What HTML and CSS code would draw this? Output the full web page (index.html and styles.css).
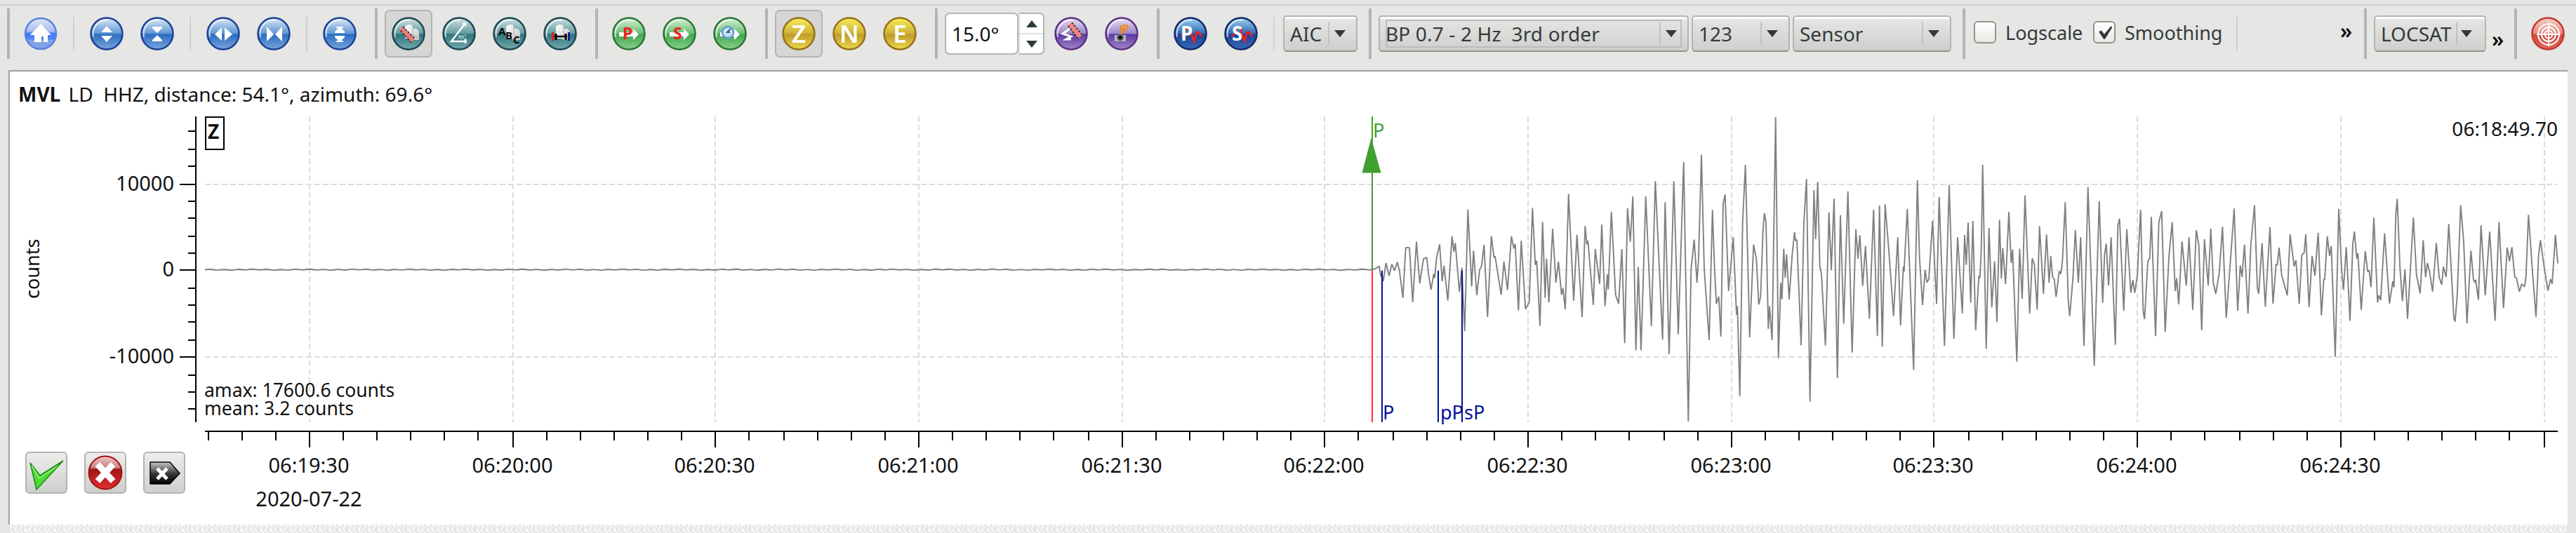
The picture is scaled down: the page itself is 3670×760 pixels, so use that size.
FILE: index.html
```
<!DOCTYPE html>
<html lang="en">
<head>
    <meta charset="UTF-8">
    <title>Waveform Picker</title>
    <link rel="stylesheet" href="styles.css">
</head>
<body>
    <!-- shared gradients and shapes -->
    <svg class="defs" width="0" height="0">
        <defs>
            <linearGradient id="home" x2="0" y2="1"><stop offset="0" stop-color="#e4e8f8"/><stop offset=".42" stop-color="#a9bdf0"/><stop offset=".5" stop-color="#3b76f6"/><stop offset=".68" stop-color="#5588f5"/><stop offset=".72" stop-color="#87a4e6"/><stop offset="1" stop-color="#7d9fe6"/></linearGradient>
            <linearGradient id="blue" x2="0" y2="1"><stop offset="0" stop-color="#dfeaf7"/><stop offset=".5" stop-color="#5c96d3"/><stop offset=".52" stop-color="#2a6cc0"/><stop offset="1" stop-color="#7ba5dc"/></linearGradient>
            <linearGradient id="teal" x2="0" y2="1"><stop offset="0" stop-color="#d3e4e5"/><stop offset=".5" stop-color="#5f9a9e"/><stop offset=".52" stop-color="#2c747c"/><stop offset="1" stop-color="#76abae"/></linearGradient>
            <linearGradient id="green" x2="0" y2="1"><stop offset="0" stop-color="#daf3da"/><stop offset=".5" stop-color="#68bb70"/><stop offset=".52" stop-color="#43a550"/><stop offset="1" stop-color="#86d289"/></linearGradient>
            <linearGradient id="gold" x2="0" y2="1"><stop offset="0" stop-color="#f7ee58"/><stop offset=".5" stop-color="#cdb136"/><stop offset=".52" stop-color="#bd9a26"/><stop offset="1" stop-color="#ebd94e"/></linearGradient>
            <linearGradient id="violet" x2="0" y2="1"><stop offset="0" stop-color="#ece6f5"/><stop offset=".5" stop-color="#9a82c7"/><stop offset=".52" stop-color="#5b38a0"/><stop offset="1" stop-color="#a187c9"/></linearGradient>
            <linearGradient id="navy" x2="0" y2="1"><stop offset="0" stop-color="#9ed4f3"/><stop offset=".5" stop-color="#2f68b0"/><stop offset=".52" stop-color="#1c4396"/><stop offset="1" stop-color="#3569b8"/></linearGradient>
            <linearGradient id="red" x2="0" y2="1"><stop offset="0" stop-color="#f7d3cc"/><stop offset=".5" stop-color="#e2877c"/><stop offset=".52" stop-color="#cf4a3f"/><stop offset="1" stop-color="#e06a5c"/></linearGradient>
            <linearGradient id="page" x2="1" y2="1"><stop offset="0" stop-color="#fff"/><stop offset="1" stop-color="#c6c6c6"/></linearGradient>
            <linearGradient id="dark" x2="0" y2="1"><stop offset="0" stop-color="#c8c8c8"/><stop offset=".55" stop-color="#333"/><stop offset="1" stop-color="#000"/></linearGradient>
            <linearGradient id="stop" x2="0" y2="1"><stop offset="0" stop-color="#edc9c9"/><stop offset=".35" stop-color="#c98080"/><stop offset=".4" stop-color="#a01414"/><stop offset="1" stop-color="#e03030"/></linearGradient>
            <pattern id="hatch" width="14" height="8" patternUnits="userSpaceOnUse">
                <path d="M0 0h2v2h-2zM6 0h4v2h-4zM2 2h2v2h-2zM10 2h2v2h-2zM6 4h2v2h-2zM0 4h2v2h-2zM8 6h2v2h-2zM12 6h2v2h-2z" fill="#fff"/>
            </pattern>
            <symbol id="sheets" viewBox="0 0 48 48">
                <path d="M17 14q4-5 10-2l1 5q8-1 9 5v11h-9l-3-2h-8z" fill="url(#page)"/>
                <path d="M28 17v9l8 3" fill="none" stroke="#aaa"/>
            </symbol>
        </defs>
    </svg>

    <div class="toolbar">
        <div class="group g-view">
            <span class="tool"><svg class="icon" viewBox="0 0 48 48"><circle class="ball home" cx="24" cy="24" r="22"/><path d="M24 10 39 26H34V36H28V28H25V36H15V26H9Z" fill="#fff"/></svg></span>
            <i class="sep"></i>
            <span class="tool"><svg class="icon" viewBox="0 0 48 48"><circle class="ball blue" cx="24" cy="24" r="22.5"/><circle class="shine" cx="24" cy="24" r="19.5"/><path d="M24 13 32 22H16ZM16 27H32L24 36Z" fill="#fff"/></svg></span>
            <span class="tool"><svg class="icon" viewBox="0 0 48 48"><circle class="ball blue" cx="24" cy="24" r="22.5"/><circle class="shine" cx="24" cy="24" r="19.5"/><path d="M17 14H31V16L24 23L17 16ZM24 26 31 33V35H17V33Z" fill="#fff"/></svg></span>
            <i class="sep"></i>
            <span class="tool"><svg class="icon" viewBox="0 0 48 48"><circle class="ball blue" cx="24" cy="24" r="22.5"/><circle class="shine" cx="24" cy="24" r="19.5"/><path d="M22 15V34L12 25ZM26 15 37 25 26 34Z" fill="#fff"/></svg></span>
            <span class="tool"><svg class="icon" viewBox="0 0 48 48"><circle class="ball blue" cx="24" cy="24" r="22.5"/><circle class="shine" cx="24" cy="24" r="19.5"/><path d="M14 14 24 25 14 35ZM36 14V35L26 25Z" fill="#fff"/></svg></span>
            <i class="sep"></i>
            <span class="tool"><svg class="icon" viewBox="0 0 48 48"><circle class="ball blue" cx="24" cy="24" r="22.5"/><circle class="shine" cx="24" cy="24" r="19.5"/><path d="M19 14H29V16H26L31 21V23H17V21L22 16H19ZM17 27H31V29L26 34H29V36H19V34H22L17 29Z" fill="#fff"/></svg></span>
        </div>

        <div class="group g-pick">
            <span class="tool pressed"><svg class="icon" viewBox="0 0 48 48"><circle class="ball teal" cx="24" cy="24" r="22.5"/><circle class="shine" cx="24" cy="24" r="19.5"/><use href="#sheets" x="2"/><path d="M11 18 16 14 33 31 28 37Z" fill="#ec7b78"/><path d="M16 14 33 31M28 37 11 18" fill="none" stroke="#222" stroke-width="1.500" stroke-dasharray="3 2"/></svg></span>
            <span class="tool"><svg class="icon" viewBox="0 0 48 48"><circle class="ball teal" cx="24" cy="24" r="22.5"/><circle class="shine" cx="24" cy="24" r="19.5"/><path d="M33 9 13 35H35M29 10l4-1v4M33 31v7" fill="none" stroke="#fff" stroke-width="2.4"/><text x="23" y="31" class="tiny">60°</text></svg></span>
            <span class="tool"><svg class="icon" viewBox="0 0 48 48"><circle class="ball teal" cx="24" cy="24" r="22.5"/><circle class="shine" cx="24" cy="24" r="19.5"/><use href="#sheets" x="2"/><text x="8" y="26" class="abc">A</text><text x="18" y="32" class="abc">B</text><text x="29" y="38" class="abc">C</text></svg></span>
            <span class="tool"><svg class="icon" viewBox="0 0 48 48"><circle class="ball teal" cx="24" cy="24" r="22.5"/><circle class="shine" cx="24" cy="24" r="19.5"/><use href="#sheets" x="1"/><path d="M16 28H34" stroke="#000" stroke-width="2.5"/><path d="M18 24v9M32 24v9" stroke="#000" stroke-width="3"/><path d="M12 22h3v12h-3z" fill="#f01818"/><path d="M35 22h3v12h-3z" fill="#1a1a90"/></svg></span>
        </div>

        <div class="group g-phase">
            <span class="tool"><svg class="icon" viewBox="0 0 48 48"><circle class="ball green" cx="24" cy="24" r="22.5"/><circle class="shine" cx="24" cy="24" r="19.5"/><path d="M10 22H30V17L38 25 30 33V28H10Z" fill="#fff"/><text x="15" y="32" class="pick">P</text></svg></span>
            <span class="tool"><svg class="icon" viewBox="0 0 48 48"><circle class="ball green" cx="24" cy="24" r="22.5"/><circle class="shine" cx="24" cy="24" r="19.5"/><path d="M10 22H30V17L38 25 30 33V28H10Z" fill="#fff"/><text x="15" y="32" class="pick">S</text></svg></span>
            <span class="tool"><svg class="icon" viewBox="0 0 48 48"><circle class="ball green" cx="24" cy="24" r="22.5"/><circle class="shine" cx="24" cy="24" r="19.5"/><path d="M10 22H30V17L38 25 30 33V28H10Z" fill="#fff"/><circle cx="21" cy="22" r="8" fill="#c5e2f5" stroke="#5f9bd6" stroke-width="2.5"/><path d="M25 17l-5 5h4" fill="none" stroke="#234" stroke-width="1.5"/></svg></span>
        </div>

        <div class="group g-comp">
            <span class="tool pressed"><svg class="icon" viewBox="0 0 48 48"><circle class="ball gold" cx="24" cy="24" r="22.5"/><text x="24" y="37" class="comp">Z</text></svg></span>
            <span class="tool"><svg class="icon" viewBox="0 0 48 48"><circle class="ball gold" cx="24" cy="24" r="22.5"/><text x="24" y="37" class="comp">N</text></svg></span>
            <span class="tool"><svg class="icon" viewBox="0 0 48 48"><circle class="ball gold" cx="24" cy="24" r="22.5"/><text x="24" y="37" class="comp">E</text></svg></span>
        </div>

        <div class="group g-rot">
            <div class="spin">
                <div class="spin-value">15.0°</div>
                <div class="spin-buttons"><span><i class="arrow up"></i></span><span><i class="arrow"></i></span></div>
            </div>
            <span class="tool"><svg class="icon" viewBox="0 0 48 48"><circle class="ball violet" cx="24" cy="24" r="22.5"/><circle class="shine" cx="24" cy="24" r="19.5"/><path d="M22 17 12 24 24 28 17 32H24" fill="none" stroke="#fff" stroke-width="3"/><path d="M19 12 25 8 40 26 34 31Z" fill="#ee8582"/><path d="M25 8 40 26M34 31 19 12" fill="none" stroke="#222" stroke-width="1.500" stroke-dasharray="3 2"/></svg></span>
            <span class="tool"><svg class="icon" viewBox="0 0 48 48"><circle class="ball violet" cx="24" cy="24" r="22.5"/><circle class="shine" cx="24" cy="24" r="19.5"/><path d="M23 12V27" stroke="#f08a1c" stroke-width="3"/><text x="25" y="23" class="ip">P</text><path d="M14 26h16v9h-16z" fill="#b9b4c0"/><circle cx="22" cy="29.500" r="5" fill="#666"/><circle cx="22" cy="29.500" r="2.500" fill="#000"/></svg></span>
        </div>

        <div class="group g-auto">
            <span class="tool"><svg class="icon" viewBox="0 0 48 48"><circle class="ball navy" cx="24" cy="24" r="22.5"/><circle class="shine" cx="24" cy="24" r="19.5"/><path class="wiggle" d="M10 27 14 25 18 16H23L29 35 33 22 36 22 40 28"/><text x="10" y="34" class="auto">P</text><path class="wiggle" d="M25 25 29 35 33 22 36 22 40 28"/></svg></span>
            <span class="tool"><svg class="icon" viewBox="0 0 48 48"><circle class="ball navy" cx="24" cy="24" r="22.5"/><circle class="shine" cx="24" cy="24" r="19.5"/><path class="wiggle" d="M10 27 14 25 18 16H23L29 35 33 22 36 22 40 28"/><text x="11" y="34" class="auto">S</text><path class="wiggle" d="M26 27 29 35 33 22 36 22 40 28"/></svg></span>
            <i class="sep"></i>
            <div class="combo c-aic"><span>AIC</span><b><i class="arrow"></i></b></div>
        </div>

        <div class="group g-filter">
            <div class="combo c-filter focus"><span>BP 0.7 - 2 Hz&nbsp; 3rd order</span><b><i class="arrow"></i></b></div>
            <div class="combo c-num"><span>123</span><b><i class="arrow"></i></b></div>
            <div class="combo c-sensor"><span>Sensor</span><b><i class="arrow"></i></b></div>
        </div>

        <div class="group g-scale">
            <label class="check c-log"><span class="box"></span>Logscale</label>
            <label class="check c-smooth"><span class="box"><svg viewBox="0 0 32 32"><path d="M7 15 11 13 16 19 27 6 29 8 17 27H15Z" fill="#2e3436"/></svg></span>Smoothing</label>
            <i class="sep"></i>
            <span class="more">»</span>
        </div>

        <div class="group g-loc">
            <div class="combo c-loc"><span>LOCSAT</span><b><i class="arrow"></i></b></div>
            <span class="more low">»</span>
        </div>

        <div class="group g-target">
            <span class="tool"><svg class="icon" viewBox="0 0 48 48"><circle class="ball red" cx="24" cy="24" r="22.5"/><g fill="none" stroke="#fff" stroke-width="2"><circle cx="25" cy="25" r="15"/><circle cx="25" cy="25" r="10"/><circle cx="25" cy="25" r="5.500"/><path d="M25 8V42M8 25H42"/></g></svg></span>
        </div>
    </div>

    <div class="panel">
        <div class="station"><b>MVL</b> LD&nbsp; HHZ, distance: 54.1°, azimuth: 69.6°</div>

        <svg class="plot" viewBox="14 160 3644 480">
            <g id="grid"></g>
            <path class="zero" d="M292 385H3644"/>
            <path id="trace" class="trace"/>

            <path class="axis" d="M279 166V602M292 615H3644"/>
            <g id="ticks"></g>
            <g class="y-label">
                <text x="248" y="272">10000</text>
                <text x="248" y="394">0</text>
                <text x="248" y="518">-10000</text>
            </g>
            <text class="unit" transform="translate(56 426) rotate(-90)">counts</text>

            <rect class="comp-box" x="293" y="167" width="26" height="46"/>
            <text class="comp-name" x="296" y="198">Z</text>
            <text class="stamp" x="3644" y="194">06:18:49.70</text>
            <text class="stats" x="291" y="565.500">amax: 17600.6 counts</text>
            <text class="stats" x="291" y="591.500">mean: 3.2 counts</text>

            <!-- manual pick -->
            <path class="pick-line" d="M1955 166V385"/>
            <path class="pick-error" d="M1955 385V602"/>
            <path class="pick-head" d="M1953.500 197 1967.500 246.500H1940.500Z"/>
            <text class="pick-name" x="1956" y="196">P</text>

            <!-- theoretical arrivals -->
            <path class="arrival" d="M1969 386V602M2049 386V602M2083 386V602"/>
            <g class="arrival-name">
                <text x="1970" y="598">P</text>
                <text x="2052" y="598">pP</text>
                <text x="2086" y="598">sP</text>
            </g>
        </svg>

        <div class="footer">
            <div class="actions">
                <span class="action"><svg viewBox="0 0 60 60"><path d="M7 16 21 34 54 13 16 54Z" fill="#4edb33" stroke="#1d8a12" stroke-width="1.500"/><path d="M9 20 20 38 45 21" fill="none" stroke="#9bf088" stroke-width="1.500"/></svg></span>
                <span class="action"><svg viewBox="0 0 60 60"><circle cx="30" cy="30" r="23.500" fill="url(#stop)" stroke="#a51414" stroke-width="2"/><path d="M19 18 41 42M41 18 19 42" stroke="#fff" stroke-width="9"/></svg></span>
                <span class="action"><svg viewBox="0 0 60 60"><path d="M10 15H38L52 31 38 46H10Z" fill="url(#dark)" stroke="#000" stroke-width="1.500"/><path d="M20 24 34 39M34 24 20 39" stroke="#fff" stroke-width="5"/></svg></span>
            </div>
            <svg class="times" viewBox="280 640 3378 108"><g id="times"></g></svg>
        </div>
    </div>
    <svg class="status"><rect width="100%" height="100%" fill="url(#hatch)"/></svg>

    <script src="plot.js"></script>
</body>
</html>
```
FILE: styles.css
```
* {
    box-sizing: border-box;
}
body {
    margin: 0;
    width: 3670px;
    height: 760px;
    overflow: hidden;
    background-color: #e6e6e4;
    font-family: "Noto Sans", "Open Sans", sans-serif;
    font-size: 28px;
    color: #111;
}
.defs {
    position: absolute;
}

/* Toolbar */
.toolbar {
    display: flex;
    height: 94px;
    margin-top: 6px;
    padding: 4px 0 0 10px;
    border-top: 2px solid #cfcfcd;
}
.group {
    display: flex;
    align-items: center;
    flex: none;
    height: 72px;
    padding-left: 10px;
    border-left: 4px solid #b4b4b2;
}
.g-view { width: 524px; }
.g-pick { width: 314px; }
.g-phase { width: 242px; }
.g-comp { width: 242px; }
.g-rot { width: 316px; }
.g-auto { width: 302px; }
.g-filter { width: 846px; }
.g-scale { width: 572px; padding-left: 12px; }
.g-loc { width: 214px; }
.g-target { width: 82px; }
.tool {
    display: flex;
    flex: none;
    align-items: center;
    justify-content: center;
    width: 68px;
    height: 68px;
    margin-right: 4px;
}
.tool.pressed {
    background-color: #d6d6d4;
    border: 2px solid #b4b4b2;
    border-radius: 7px;
}
.icon {
    width: 48px;
    height: 48px;
    flex: none;
}
.sep {
    width: 2px;
    height: 48px;
    margin: 0 12px 0 8px;
    background-color: #cfcfcd;
}
.ball { stroke-width: 2.5; }
.home { fill: url(#home); stroke: #5b82dc; }
.blue { fill: url(#blue); stroke: #1c4296; }
.teal { fill: url(#teal); stroke: #1c4652; }
.green { fill: url(#green); stroke: #2a7438; }
.gold { fill: url(#gold); stroke: #96701c; }
.violet { fill: url(#violet); stroke: #593084; }
.navy { fill: url(#navy); stroke: #122a68; }
.red { fill: url(#red); stroke: #c4382e; }
.shine {
    fill: none;
    stroke: #fff;
    stroke-width: 2;
    stroke-opacity: 0.7;
    stroke-dasharray: 38 200;
    stroke-dashoffset: -56;
}
.icon text {
    font-weight: bold;
}
.tiny { font-size: 7px; fill: #b5d5d8; }
.abc { font-size: 15px; fill: #000; }
.pick { font-size: 23px; fill: #ee2020; }
.comp { font-size: 35px; fill: #fff; text-anchor: middle; }
.icon .comp { font-weight: 600; }
.ip { font-size: 16px; fill: #f08a1c; }
.auto { font-size: 28px; fill: #fff; }
.wiggle { fill: none; stroke: #f02020; stroke-width: 2.5; }

.arrow {
    border: 8px solid transparent;
    border-top: 10px solid #2e3a3a;
    border-bottom: 0;
}
.arrow.up {
    border-top: 0;
    border-bottom: 10px solid #2e3a3a;
}
.spin {
    display: flex;
    width: 142px;
    height: 60px;
    margin-right: 4px;
}
.spin-value {
    width: 105px;
    padding-left: 8px;
    line-height: 56px;
    background-color: #fff;
    border: 2px solid #b4b4b2;
    border-radius: 7px;
}
.spin-buttons {
    display: flex;
    flex-direction: column;
    width: 37px;
    background-color: #fff;
    border: 2px solid #b4b4b2;
    border-left-color: #e0e0de;
    border-radius: 0 7px 7px 0;
}
.spin-buttons span {
    display: flex;
    flex: 1;
    align-items: center;
    justify-content: center;
}
.spin-buttons span + span {
    border-top: 2px solid #e0e0de;
}
.combo {
    display: flex;
    align-items: center;
    height: 52px;
    margin-right: 4px;
    padding-left: 8px;
    color: #343a3b;
    background: linear-gradient(#fff 0, #fff 2px, #e4e4e2 4px, #cfcfcd);
    border: 2px solid #b4b4b2;
    border-bottom-color: #94948c;
    border-radius: 5px;
    position: relative;
}
.combo span {
    flex: 1;
    line-height: 46px;
    white-space: nowrap;
}
.combo b {
    display: flex;
    align-items: center;
    justify-content: center;
    width: 40px;
    height: 32px;
    padding-right: 8px;
    border-left: 2px solid #c2c2c0;
}
/* focus frame drawn over the button */
.combo.focus::after {
    content: "";
    position: absolute;
    inset: 4px 8px 4px 8px;
    border: 2px solid #bcbcba;
}
.c-aic { width: 106px; }
.c-filter { width: 442px; }
.c-filter span { letter-spacing: 0.15px; }
.c-num { width: 140px; }
.c-sensor { width: 226px; }
.c-loc { width: 160px; }
.c-loc b {
    width: 41px;
    padding-right: 14px;
}
.check {
    display: flex;
    align-items: center;
    gap: 13px;
    height: 50px;
    margin-bottom: 4px;
    font-size: 27px;
    color: #343a3b;
}
.c-log { width: 170px; }
.c-smooth { width: 196px; }
.box {
    flex: none;
    width: 32px;
    height: 32px;
    background: linear-gradient(#fff, #e8e8e6);
    border: 2px solid #94948c;
    border-radius: 6px;
}
.box svg {
    display: block;
    width: 28px;
    height: 28px;
}
.more {
    margin: -10px 0 0 134px;
    font-size: 30px;
    font-weight: 600;
}
.more.low {
    margin: 14px 0 0 4px;
}

/* Trace panel */
.panel {
    display: flex;
    flex-direction: column;
    width: 3646px;
    height: 648px;
    margin-left: 12px;
    background-color: #fff;
    border-top: 2px solid #a0a09e;
    border-left: 2px solid #a0a09e;
}
.station {
    height: 58px;
    padding: 12px 0 0 12px;
    line-height: 40px;
    white-space: nowrap;
}
.station b {
    margin-right: 4px;
}
.plot {
    display: block;
    width: 3644px;
    height: 480px;
}
.plot text, .times text {
    font-size: 29px;
    fill: #111;
}
.grid-line {
    stroke: #dcdcdc;
    stroke-width: 2;
    stroke-dasharray: 8 4;
}
.zero { stroke: #efefff; stroke-width: 2; }
.trace {
    fill: none;
    stroke: #808080;
    stroke-width: 1.9;
    stroke-linejoin: bevel;
}
.axis {
    fill: none;
    stroke: #000;
    stroke-width: 2;
}
.y-label { text-anchor: end; }
.plot .unit { font-size: 27px; }
.comp-box { fill: none; stroke: #000; stroke-width: 2; }
.plot .comp-name { font-size: 28px; font-weight: bold; }
.plot .stamp { font-size: 28px; text-anchor: end; }
.plot .stats { font-size: 26.5px; }
.pick-line { stroke: #40a030; stroke-width: 2; }
.pick-error { stroke: #ff3030; stroke-width: 2; }
.pick-head { fill: #40a030; }
.plot .pick-name { font-size: 27px; fill: #40a030; }
.arrival { stroke: #00109a; stroke-width: 2; }
.plot .arrival-name text { font-size: 27px; fill: #00109a; }
.footer {
    display: flex;
    height: 108px;
}
.actions {
    display: flex;
    gap: 24px;
    width: 266px;
    padding: 4px 0 0 22px;
}
.action {
    flex: none;
    width: 60px;
    height: 60px;
    background: linear-gradient(#ececea, #cfcfcd);
    border: 2px solid #b4b4b2;
    border-radius: 6px;
}
.action svg {
    display: block;
    width: 60px;
    height: 60px;
    margin: -2px;
}
.times {
    width: 3378px;
    height: 108px;
    text-anchor: middle;
}
.status {
    display: block;
    width: 3642px;
    height: 12px;
    margin-left: 14px;
}
```
FILE: plot.js
```
// Time axis: a minor tick every 5 s, a label every 30 s
const T0 = 1887.73;
const STEP = 48.233;
const LABELS = ["06:19:30", "06:20:00", "06:20:30", "06:21:00", "06:21:30", "06:22:00",
    "06:22:30", "06:23:00", "06:23:30", "06:24:00", "06:24:30", ""];
const Y_TICKS = [187, 213, 237, 263, 287, 311, 337, 361, 385, 411, 435, 459, 485, 509, 535, 559, 583];

const grid = document.getElementById("grid");
const ticks = document.getElementById("ticks");
const times = document.getElementById("times");

function add(parent, tag, attrs, text) {
    const el = document.createElementNS("http://www.w3.org/2000/svg", tag);
    for (const key in attrs) el.setAttribute(key, attrs[key]);
    if (text) el.textContent = text;
    parent.appendChild(el);
}

for (let k = -33; k <= 36; k++) {
    const x = 2 * Math.floor((T0 + k * STEP) / 2) + 1;
    const major = k % 6 === 0 && k >= -30;
    add(ticks, "path", { class: "axis", d: `M${x} 615V${major ? 638 : 628}` });
    if (major) {
        add(grid, "path", { class: "grid-line", d: `M${x} 166V602` });
        const label = LABELS[(k + 30) / 6];
        if (label) add(times, "text", { x: x - 1, y: 674 }, label);
    }
}
add(times, "text", { x: 440, y: 721.5 }, "2020-07-22");

for (const y of Y_TICKS) {
    const major = y === 263 || y === 385 || y === 509;
    add(ticks, "path", { class: "axis", d: `M${major ? 256 : 268} ${y}H279` });
    if (major && y !== 385) add(grid, "path", { class: "grid-line", d: `M292 ${y}H3644` });
}

// Samples per window: x offset, y scale, then "x,y" pairs
const WINDOWS = [
    { x: 1880, sy: 2.57, data: "245,596 255,590 262,628 266,615 272,645 284,578 297,625 309,583 320,606 332,575 342,610 356,706 368,522 384,522 398,722 414,500 428,653 444,563 458,558 466,620 476,676 488,617 492,633 500,558 513,510 524,645 532,588 548,716 566,480 574,537 580,505 598,685 608,595 620,828 634,382 650,664 658,533 672,696 684,603 692,590 703,512 718,776 734,480 746,560 750,553 776,695 788,573 803,677 820,480 830,525 836,508 850,752 862,497 880,747 896,722 910,377 922,585 928,570 942,808 953,428 964,706 970,562 980,723 996,453 1010,650 1021,573 1034,695 1040,670 1050,748 1064,325 1086,716 1100,475 1122,777 1135,443 1142,510 1147,497 1170,732 1178,527 1197,655 1206,438 1220,737 1230,620 1234,675 1247,390 1265,695 1278,727 1292,527 1304,872 1316,378 1328,500 1339,334 1352,898 1362,593 1374,898" },
    { x: 2340, sy: 3, data: "14,390 38,945 55,325 86,1003 97,415 114,1065 134,325 153,980 176,243 196,1353 208,700 221,575 233,760 240,650 252,212 264,700 285,1005 299,448 308,700 316,850 326,818 335,990 345,420 353,382 368,795 388,565 402,897 406,860 416,1245 428,500 440,255 458,993 475,596 487,657 497,853 505,820 515,540 521,462 528,500 538,957 543,860 554,1005 569,50 581,1083 591,760 596,830 604,614 610,738 616,638 627,832 640,640 650,543 654,580 660,575 678,1027 690,500 701,316 716,1268 733,363 740,573 749,328 758,690 765,722 782,1028 797,458 807,706 819,400 833,1167 846,470 860,935 878,368 896,1058 912,530 921,656 929,556 941,773 953,602 970,914 988,447 1004,988 1013,430 1025,1033 1037,423 1055,650 1073,902 1091,565 1103,943 1115,690 1118,712 1132,443 1159,1132 1175,320 1184,650 1197,855 1208,705 1216,758 1224,745 1240,494 1257,850 1268,392 1291,1030 1311,343" },
    { x: 2780, sy: 3, data: "11,1000 27,565 47,890 57,555 64,683 72,502 83,845 92,495 104,963 118,730 122,740 128,620 134,254 149,1042 161,525 173,865 185,668 195,928 206,490 214,742 220,612 232,765 246,457 256,675 262,617 280,1097 292,614 303,828 315,386 335,892 346,655 355,680 367,875 377,517 394,807 407,553 418,760 425,645 433,735 440,745 448,820 461,710 468,722 475,670 487,415 500,840 506,902 520,740 530,535 543,760 553,565 567,1030 584,350 611,1115 632,410 647,845 655,640 662,592 672,772 683,565 701,1025 712,515 719,485 737,880 750,530 767,802 776,748 784,803 795,730 809,448 820,880 826,915 840,668 848,655 855,478 873,988 887,500 899,453 914,970 930,650 944,500 957,795 963,740 972,852 986,583 1004,772 1016,565 1032,875 1047,535 1058,600 1070,963 1082,573 1098,772 1109,528 1120,760 1130,807 1145,720 1159,520 1175,910 1195,640 1209,442 1224,880 1235,685 1243,735 1253,596 1268,892 1280,600 1296,428 1308,780 1314,807 1328,590" },
    { x: 3220, sy: 2.57, data: "22,738 42,447 55,727 68,583 73,587 81,522 92,623 116,697 128,473 145,590 153,568 167,728 178,550 188,540 195,473 209,740 222,552 234,625 248,468 262,770 272,637 276,640 287,480 297,552 304,516 321,922 336,380 348,600 356,677 368,520 384,790 396,510 403,463 413,562 418,543 432,750 449,535 460,610 466,605 474,667 486,412 502,723 507,697 515,715 532,470 553,727 567,645 572,667 580,400 586,343 598,600 608,718 619,602 630,783 655,412 668,620 684,690 697,495 707,630 715,578 724,610 737,683 753,505 765,630 776,658 783,592 795,630 806,435 828,780 833,793 842,700 857,367 870,500 884,800 901,533 912,640 918,650 921,640 933,713 944,440 962,697 981,463 1004,790 1021,428 1040,743 1056,522 1066,572 1076,520 1088,630 1095,632 1108,683 1118,655 1130,665 1136,630 1147,402 1165,620 1179,775 1190,550 1198,495 1210,570 1230,680 1241,637 1248,655 1262,475 1272,580" }
];

const points = [];
// quiet noise before the arrival
for (let x = 292; x < 1960; x += 4) {
    points.push(x + "," + (384.5 + Math.sin(x * 0.31) * 0.5 + Math.sin(x * 0.083) * 0.3).toFixed(1));
}
for (const w of WINDOWS) {
    for (const pair of w.data.split(" ")) {
        const [px, py] = pair.split(",").map(Number);
        points.push((w.x + px / 3).toFixed(1) + "," + (150 + py / w.sy).toFixed(1));
    }
}
document.getElementById("trace").setAttribute("d", "M" + points.join(" L"));
```
